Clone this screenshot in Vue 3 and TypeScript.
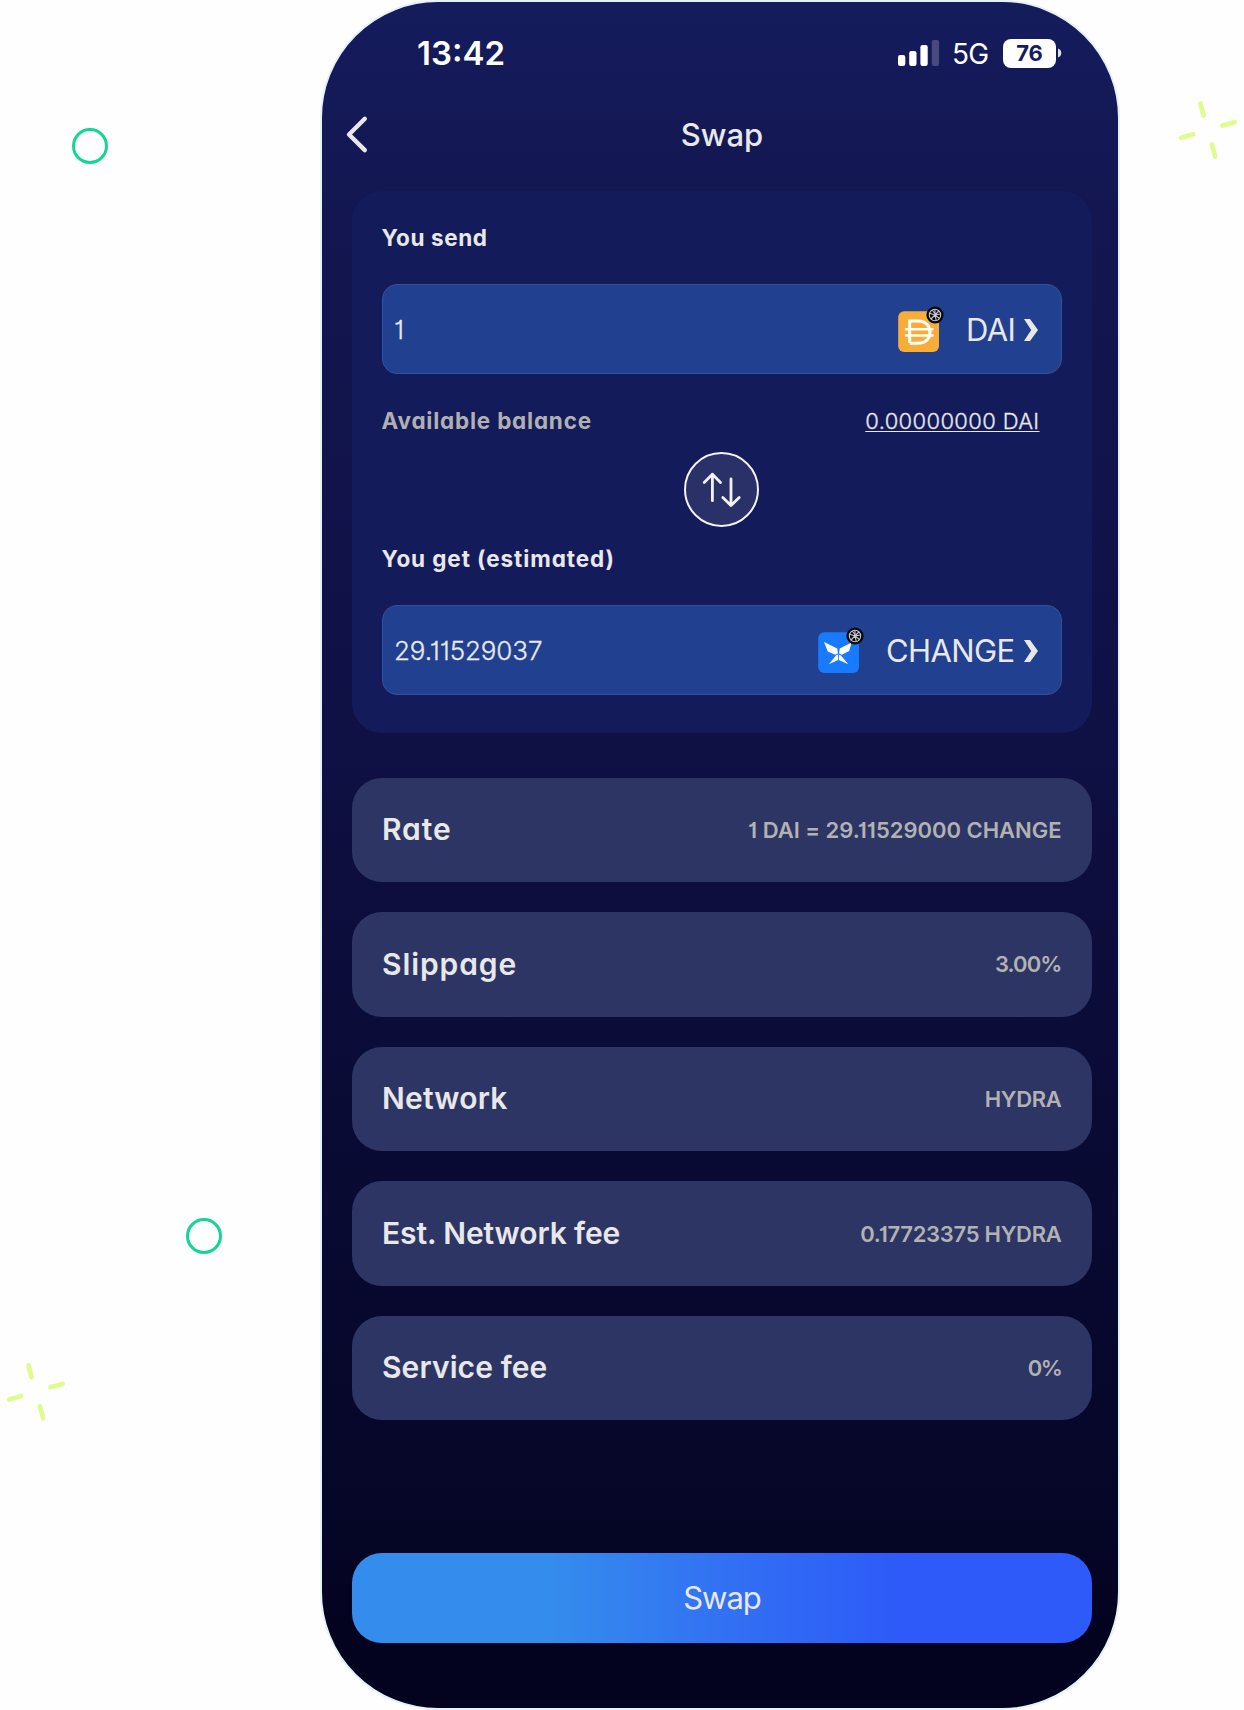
<script setup lang="ts">
interface Detail {
  label: string
  value: string
  labelSpacing: number
  valueSpacing: number
}

const details: Detail[] = [
  { label: 'Rate', value: '1 DAI = 29.11529000 CHANGE', labelSpacing: 0.9, valueSpacing: -0.02 },
  { label: 'Slippage', value: '3.00%', labelSpacing: 0.9, valueSpacing: -0.9 },
  { label: 'Network', value: 'HYDRA', labelSpacing: 0.22, valueSpacing: -0.3 },
  { label: 'Est. Network fee', value: '0.17723375 HYDRA', labelSpacing: -0.1, valueSpacing: -0.28 },
  { label: 'Service fee', value: '0%', labelSpacing: 0.1, valueSpacing: -1.4 },
]
</script>

<template>
  <main class="stage">
    <svg class="decor" width="1244" height="1710" viewBox="0 0 1244 1710" fill="none" aria-hidden="true">
      <defs>
        <g id="spark" stroke="#dffc8c" stroke-width="4.7" stroke-linecap="round">
          <path d="M28.4 1365.2L31.6 1377.3M50.4 1387.3L62.6 1383.9M9.1 1399.5L21.2 1396M39.9 1406.2L43.2 1418.4" />
        </g>
      </defs>
      <circle cx="90" cy="146" r="16.5" stroke="#12d693" stroke-width="3" />
      <circle cx="204" cy="1236" r="16.5" stroke="#12d693" stroke-width="3" />
      <use href="#spark" />
      <use href="#spark" transform="translate(1172 -1261.7)" />
    </svg>

    <section class="phone">
      <div class="status">
        <span class="time">13:42</span>
        <div class="indicators">
          <svg class="signal" width="42" height="28" viewBox="0 0 42 28" fill="#fff">
            <rect x="0" y="16" width="7.3" height="11" rx="2.2" />
            <rect x="11.2" y="12" width="7.3" height="15" rx="2.2" />
            <rect x="22.4" y="6" width="7.3" height="21" rx="2.2" />
            <rect x="33.8" y="1" width="7.3" height="26" rx="2.2" fill="#474a7d" />
          </svg>
          <span class="carrier">5G</span>
          <span class="battery">76</span>
          <svg class="nub" width="4" height="10" viewBox="0 0 4 10"><path d="M0 0.5C4.4 2 4.4 8 0 9.5Z" fill="#dfe0ea" /></svg>
        </div>
      </div>

      <header class="header">
        <svg class="back" width="24" height="40" viewBox="0 0 24 40" fill="none">
          <path d="M19.8 3.8L4 19.5L19.8 35.1" stroke="#e8e8e8" stroke-width="4.4" stroke-linecap="round" stroke-linejoin="round" />
        </svg>
        <h1>Swap</h1>
      </header>

      <div class="card">
        <div class="label geo send-label">You send</div>
        <div class="field">
          <span class="amount geo">1</span>
          <svg class="token" width="52" height="52" viewBox="0 0 52 52" fill="none">
            <rect x="0.2" y="10.2" width="40.8" height="40.8" rx="6" fill="#f7ad38" />
            <g stroke="#fff" stroke-width="3">
              <path d="M11.7 42V20.1H20C28.5 20.1 32 25.6 32 31.2S28.5 42.3 20 42.3H11.7" />
              <path d="M7 28.2H35.5M7 34.4H35.5" stroke-width="2.5" />
            </g>
            <circle cx="37" cy="14" r="8.6" fill="#05050b" />
            <g stroke="#c9c9cc" stroke-width="1.1">
              <circle cx="37" cy="14" r="5.7" />
              <path d="M34.4 9.2L37.8 14L42.2 13M40.8 10L37 14L38.2 19.2M31.6 12.3L37 14L33 18M37 8.4L37 14L41.4 17.5" />
            </g>
          </svg>
          <span class="symbol dai">DAI</span>
          <svg class="caret" width="14" height="22" viewBox="0 0 14 22"><path d="M0 0H6L14 11L6 22H0L7.2 11Z" fill="#e8e8e8" /></svg>
        </div>
        <div class="balance">
          <span class="balance-label geo">Available balance</span>
          <span class="balance-value geo">0.00000000 DAI</span>
        </div>
        <button class="flip" aria-label="Flip">
          <svg width="40" height="40" viewBox="0 0 40 40" fill="none" stroke="#f3f3f5" stroke-width="2.8" stroke-linecap="round" stroke-linejoin="round">
            <path d="M10.4 30.7V4.2M2.2 12.4L10.4 4.2L18.5 12.4M29 9V35.6M20.8 27.4L29 35.6L37.2 27.4" />
          </svg>
        </button>
        <div class="label geo get-label">You get (estimated)</div>
        <div class="field">
          <span class="amount geo">29.11529037</span>
          <svg class="token" width="52" height="52" viewBox="0 0 52 52" fill="none">
            <rect x="0.2" y="10.2" width="40.8" height="40.8" rx="6" fill="#187bff" />
            <path d="M6 20L19.2 26.4L20 31.3L17.3 32.8L9.8 29.5Z M33.6 20.5L21.8 26.4L21 31.3L23.7 32.8L31.2 29Z" fill="#fff" />
            <path d="M18 33.5L20.1 32.6V38L10.8 42.2Z M23 33.5L20.9 32.6V38L30.2 42.2Z" fill="#fff" />
            <circle cx="37" cy="14" r="8.6" fill="#05050b" />
            <g stroke="#c9c9cc" stroke-width="1.1">
              <circle cx="37" cy="14" r="5.7" />
              <path d="M34.4 9.2L37.8 14L42.2 13M40.8 10L37 14L38.2 19.2M31.6 12.3L37 14L33 18M37 8.4L37 14L41.4 17.5" />
            </g>
          </svg>
          <span class="symbol change">CHANGE</span>
          <svg class="caret" width="14" height="22" viewBox="0 0 14 22"><path d="M0 0H6L14 11L6 22H0L7.2 11Z" fill="#e8e8e8" /></svg>
        </div>
      </div>

      <div class="details">
        <div v-for="d in details" :key="d.label" class="detail">
          <span class="detail-label geo" :style="{ letterSpacing: d.labelSpacing + 'px' }">{{ d.label }}</span>
          <span class="detail-value geo" :style="{ letterSpacing: d.valueSpacing + 'px' }">{{ d.value }}</span>
        </div>
      </div>

      <button class="submit">Swap</button>
    </section>
  </main>
</template>

<style>
body {
  background: #fefefe;
}
</style>

<style scoped>
* {
  box-sizing: border-box;
}

.stage {
  position: relative;
  width: 1244px;
  height: 1710px;
  padding-left: 320px;
  overflow: hidden;
  font-family: Inter, 'Liberation Sans', sans-serif;
  color: #e8e8e8;
}

.decor {
  position: absolute;
  top: 0;
  left: 0;
}

.phone {
  position: relative;
  width: 800px;
  height: 1710px;
  border: 2px solid #e6f2f9;
  border-radius: 118px;
  padding: 0 26px 0 30px;
  background: linear-gradient(180deg, #151c5c 0%, #141a58 5%, #131650 13%, #0f1044 43%, #0b0c38 59%, #060628 88%, #03021f 96%, #03021f 100%);
}

.status {
  display: flex;
  align-items: center;
  justify-content: space-between;
  height: 102px;
  padding: 0 30px 0 65px;
  color: #fff;
}

.time {
  font-size: 33px;
  font-weight: 600;
}

.indicators {
  display: flex;
  align-items: center;
}

.carrier {
  width: 50px;
  margin-left: 12px;
  margin-right: 1px;
  font-size: 28px;
  letter-spacing: -0.8px;
  line-height: 36px;
  padding-top: 2px;
}

.battery {
  width: 53px;
  height: 29px;
  border-radius: 8px;
  background: #fff;
  color: #151c5c;
  font-size: 22px;
  font-weight: 700;
  line-height: 29px;
  text-align: center;
}

.nub {
  margin-left: 2px;
}

.header {
  display: flex;
  align-items: center;
  height: 61px;
  margin: 0 0 26px;
}

.back {
  margin-left: -7px;
}

h1 {
  flex: 1;
  margin: 0 17px 0 0;
  font-size: 31px;
  font-weight: 500;
  line-height: 61px;
  text-align: center;
}

.geo {
  font-feature-settings: 'cv11', 'cv01';
}

.card {
  display: flex;
  flex-direction: column;
  height: 541.5px;
  padding: 0 30px 0 29.5px;
  border-radius: 30px;
  background: #141b5a;
}

.label {
  font-size: 22.5px;
  font-weight: 700;
  white-space: nowrap;
}

.send-label {
  height: 93px;
  line-height: 93px;
  letter-spacing: 0.6px;
}

.get-label {
  height: 78px;
  line-height: 64px;
  letter-spacing: 0.9px;
}

.field {
  display: flex;
  align-items: center;
  height: 90px;
  padding: 0 23px 0 11.5px;
  border: 1px solid #34509b;
  border-radius: 15px;
  background: #214190;
}

.amount {
  flex: 1;
  font-size: 26px;
  font-weight: 300;
  letter-spacing: -0.1px;
  -webkit-text-stroke: 0.3px currentColor;
}

.token {
  flex: none;
  margin-top: -5px;
}

.symbol {
  flex: none;
  font-size: 31px;
  font-weight: 400;
  letter-spacing: -0.6px;
  white-space: nowrap;
}

.dai {
  width: 58px;
  margin-left: 16px;
}

.change {
  width: 138px;
  margin-left: 16px;
}

.caret {
  flex: none;
  margin-top: 1px;
}

.balance {
  display: flex;
  justify-content: space-between;
  align-items: center;
  height: 78px;
  padding: 15px 22.5px 0 0;
}

.balance-label {
  color: #b0b0b0;
  font-size: 22.5px;
  font-weight: 700;
  letter-spacing: 0.77px;
}

.balance-value {
  font-size: 22px;
  font-weight: 300;
  letter-spacing: 0.35px;
  -webkit-text-stroke: 0.3px currentColor;
  text-decoration: underline;
  text-decoration-thickness: 1px;
  text-underline-offset: 2px;
}

.flip {
  display: flex;
  align-items: center;
  justify-content: center;
  align-self: center;
  width: 75px;
  height: 75px;
  padding: 0;
  border: 2px solid #f3f3f5;
  border-radius: 50%;
  background: #2a3068;
}

.details {
  display: flex;
  flex-direction: column;
  gap: 30px;
  margin-top: 45px;
}

.detail {
  display: flex;
  align-items: center;
  justify-content: space-between;
  height: 104.6px;
  padding: 0 30.5px 0 30px;
  border-radius: 30px;
  background: #2d3565;
}

.detail-label {
  padding-bottom: 1.4px;
  font-size: 30px;
  font-weight: 600;
}

.detail-value {
  color: #b2b2b2;
  font-size: 22px;
  font-weight: 600;
}

.submit {
  display: block;
  width: 100%;
  height: 90px;
  margin-top: 132.5px;
  padding: 0;
  border: 0;
  border-radius: 30px;
  background: linear-gradient(90deg, #348cec 0%, #348cec 27%, #3271f3 50%, #2d5af8 74%, #2d5af8 100%);
  color: #e8e8e8;
  font: 400 31px/90px Inter, 'Liberation Sans', sans-serif;
  letter-spacing: -1px;
}
</style>
